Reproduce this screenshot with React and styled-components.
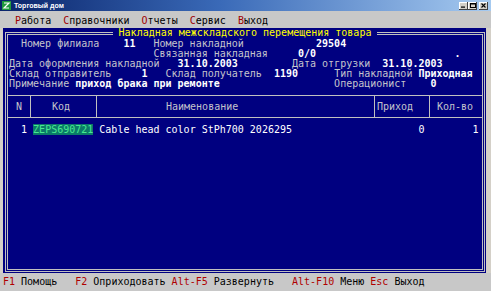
import React from "react";
import styled, { createGlobalStyle } from "styled-components";

const GlobalStyle = createGlobalStyle`
    html, body {
        margin: 0;
        padding: 0;
        background: #d4d0c8;
    }
`;

const MONO = `"DejaVu Sans Mono", "Liberation Mono", monospace`;

const Window = styled.div`
    width: 491px;
    height: 291px;
    display: flex;
    flex-direction: column;
    background: #d4d0c8;
    overflow: hidden;
    font-family: ${MONO};
    font-size: 10px;
`;

const TitleBar = styled.div`
    height: 11px;
    display: flex;
    align-items: center;
    padding: 0 3px 0 2px;
    background: linear-gradient(to right, #0a246a, #3a6ab8 45%, #a6caf0);
`;

const TitleText = styled.span`
    margin-left: 3px;
    color: #fff;
    font-family: "Liberation Sans", Arial, sans-serif;
    font-weight: bold;
    font-size: 7px;
    line-height: 11px;
`;

const CaptionGroup = styled.div`
    margin-left: auto;
    display: flex;
    gap: 2px;
`;

const CaptionPair = styled.div`
    display: flex;
`;

const CaptionButton = styled.div`
    width: 9px;
    height: 8px;
    background: #d4d0c8;
    box-shadow: inset -1px -1px #404040, inset 1px 1px #fff;
    display: flex;
    align-items: center;
    justify-content: center;
`;

const MenuBar = styled.div`
    height: 17px;
    padding: 3px 0 0 3px;
    box-sizing: border-box;
    line-height: 14px;
    white-space: pre;
    color: #000;
    background: #c8c8c8;
`;

const Hot = styled.span`
    color: #a00000;
`;

const Screen = styled.div`
    flex: 1;
    margin: 0 5px 0 3px;
    background: #000080;
    display: flex;
    flex-direction: column;
    padding: 0 1px 1px 2px;
    min-height: 0;
`;

const Frame = styled.fieldset`
    flex: 1;
    margin: 0;
    padding: 1px 0 0 0;
    min-width: 0;
    border: 3px double #c0c0c0;
`;

const FrameTitle = styled.legend`
    margin: 0 auto;
    padding: 0;
    line-height: 10px;
    white-space: pre;
    color: #ffff00;
`;

const Line = styled.div`
    height: 10px;
    line-height: 10px;
    padding-left: 1px;
    white-space: pre;
    color: ${(p) => (p.$bright ? "#fff" : "#c4c4cc")};
    margin-top: ${(p) => p.$gap || 0}px;
`;

const Value = styled.span`
    color: #fff;
    font-weight: bold;
`;

const Marked = styled.span`
    color: #48e890;
    background: #0a7a68;
`;

const TableHead = styled.div`
    margin-top: 6px;
    display: grid;
    grid-template-columns: 22px 66px 278px 55px 1fr;
    border-top: 1px solid #c0c0c0;
    border-bottom: 1px solid #c0c0c0;
`;

const HeadCell = styled.div`
    box-sizing: border-box;
    height: 21px;
    line-height: 21px;
    padding-left: ${(p) => p.$pad}px;
    color: #c4c4cc;
    white-space: pre;
    border-left: ${(p) => (p.$first ? "none" : "1px solid #c0c0c0")};
`;

const StatusBar = styled.div`
    height: 18px;
    line-height: 18px;
    padding-left: 3px;
    white-space: pre;
    color: #000;
    background: #c8c8c8;
`;

const Key = styled.span`
    color: #b00000;
`;

const AppIcon = () => (
    <svg width="9" height="9" viewBox="0 0 9 9">
        <rect width="9" height="9" fill="#1f9a3c" />
        <path d="M2 2h5L2 7h5" stroke="#fff" strokeWidth="1.2" fill="none" />
    </svg>
);

const MinIcon = () => (
    <svg width="5" height="5" viewBox="0 0 5 5">
        <rect x="0" y="3.5" width="4" height="1.2" fill="#000" />
    </svg>
);

const MaxIcon = () => (
    <svg width="6" height="5" viewBox="0 0 6 5">
        <rect x="0.5" y="0.5" width="5" height="4" fill="none" stroke="#000" strokeWidth="1" />
        <rect x="0" y="0" width="6" height="1.5" fill="#000" />
    </svg>
);

const CloseIcon = () => (
    <svg width="5" height="5" viewBox="0 0 5 5">
        <path d="M0.5 0.5l4 4M4.5 0.5l-4 4" stroke="#000" strokeWidth="1.1" />
    </svg>
);

const menu = ["Работа", "Справочники", "Отчеты", "Сервис", "Выход"];

const columns = [
    { title: "N", pad: 8 },
    { title: "Код", pad: 21 },
    { title: "Наименование", pad: 69 },
    { title: "Приход", pad: 2 },
    { title: "Кол-во", pad: 7 },
];

const shortcuts = [
    ["F1", " Помощь   "],
    ["F2", " Оприходовать "],
    ["Alt-F5", " Развернуть   "],
    ["Alt-F10", " Меню "],
    ["Esc", " Выход"],
];

export default function App() {
    return (
        <>
            <GlobalStyle />
            <Window>
                <TitleBar>
                    <AppIcon />
                    <TitleText>Торговый дом</TitleText>
                    <CaptionGroup>
                        <CaptionPair>
                            <CaptionButton><MinIcon /></CaptionButton>
                            <CaptionButton><MaxIcon /></CaptionButton>
                        </CaptionPair>
                        <CaptionButton><CloseIcon /></CaptionButton>
                    </CaptionGroup>
                </TitleBar>
                <MenuBar>
                    {"  "}
                    {menu.map((m, i) => (
                        <React.Fragment key={m}>
                            <Hot>{m[0]}</Hot>
                            {m.slice(1)}
                            {i < menu.length - 1 ? "  " : ""}
                        </React.Fragment>
                    ))}
                </MenuBar>
                <Screen>
                    <Frame>
                        <FrameTitle> Накладная межскладского перемещения товара </FrameTitle>
                        <Line>
                            {"  Номер филиала    "}<Value>11</Value>
                            {"   Номер накладной            "}<Value>29504</Value>
                        </Line>
                        <Line>
                            {"                        Связанная накладная     "}<Value>0/0</Value>
                            {"                       "}<Value>.</Value>
                        </Line>
                        <Line>
                            {"Дата оформления накладной   "}<Value>31.10.2003</Value>
                            {"         Дата отгрузки  "}<Value>31.10.2003</Value>
                        </Line>
                        <Line>
                            {"Склад отправитель     "}<Value>1</Value>
                            {"   Склад получатель  "}<Value>1190</Value>
                            {"      Тип накладной "}<Value>Приходная</Value>
                        </Line>
                        <Line>
                            {"Примечание "}<Value>приход брака при ремонте</Value>
                            {"                   Операционист    "}<Value>0</Value>
                        </Line>
                        <TableHead>
                            {columns.map((c, i) => (
                                <HeadCell key={c.title} $pad={c.pad} $first={i === 0}>
                                    {c.title}
                                </HeadCell>
                            ))}
                        </TableHead>
                        <Line $gap={7} $bright>
                            {"  1 "}<Marked>ZEPS690721</Marked>
                            {" Cable head color StPh700 2026295                     0        1"}
                        </Line>
                    </Frame>
                </Screen>
                <StatusBar>
                    {shortcuts.map(([k, label]) => (
                        <React.Fragment key={k}>
                            <Key>{k}</Key>
                            {label}
                        </React.Fragment>
                    ))}
                </StatusBar>
            </Window>
        </>
    );
}
